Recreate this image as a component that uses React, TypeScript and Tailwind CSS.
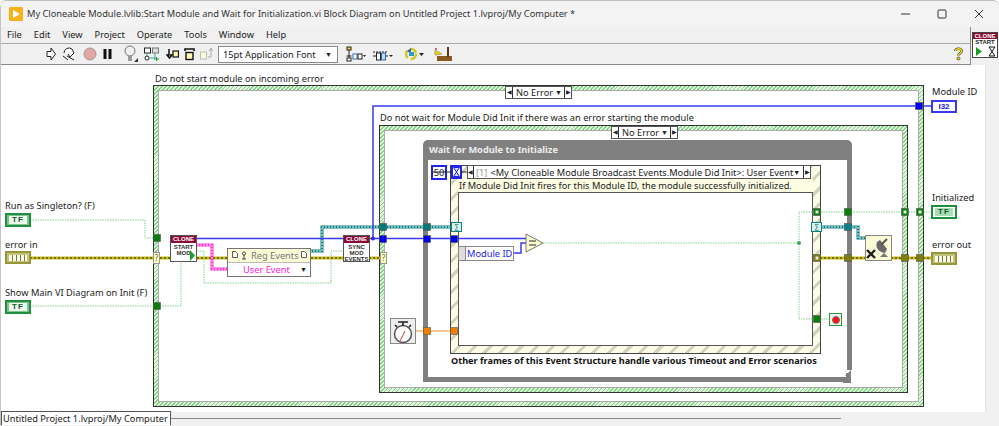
import React from "react";

const GH = "bg-[repeating-linear-gradient(135deg,#86d286_0px,#86d286_1.2px,#e2f5df_1.2px,#e2f5df_2.8px)]";
const EH = "bg-[repeating-linear-gradient(135deg,#d3d3bd_0px,#d3d3bd_3px,#fbfbe8_3px,#fbfbe8_11px)]";

const Wire = ({ d, k }: { d: string; k: "blue" | "err" | "teal" | "pink" | "green" | "orange" }) => {
  if (k === "blue") return <path d={d} fill="none" stroke="#3a3af2" strokeWidth="1.5" />;
  if (k === "orange") return <path d={d} fill="none" stroke="#f2902a" strokeWidth="1.2" />;
  if (k === "green") return <path d={d} fill="none" stroke="#86cf8c" strokeWidth="1" strokeDasharray="1.5 1" />;
  const c = { err: ["#c9bb10", "#222200", 3, "2 2"], teal: ["#0f8080", "#e8ffff", 3, "2 1"], pink: ["#ff30d8", "#ffe0fa", 3, "2 1"] }[k] as [string, string, number, string];
  return (
    <g fill="none">
      <path d={d} stroke={c[0]} strokeWidth={c[2]} />
      <path d={d} stroke={c[1]} strokeWidth="1" strokeDasharray={c[3]} />
    </g>
  );
};

const Tun = ({ x, y, c, dot }: { x: number; y: number; c: string; dot?: boolean }) => (
  <g>
    <rect x={x - 3.5} y={y - 3.5} width="7" height="7" fill={c} stroke="#555" strokeWidth="0.6" />
    {dot && <rect x={x - 1.5} y={y - 1.5} width="3" height="3" fill="#fff" opacity="0.85" />}
  </g>
);

const Diagram = () => (
  <svg className="absolute inset-0 w-full h-full" viewBox="0 0 999 347">
    <g transform="translate(0,-65)">
      <Wire k="green" d="M30 220H145V238H155" />
      <Wire k="green" d="M30 306H155M160 306H181V262" />
      <Wire k="green" d="M197 251H204V283H331V251H343" />
      <Wire k="err" d="M30 258H155M160 258H170M197 258H227M311 258H343M369 258H381" />
      <Wire k="pink" d="M197 245H212V269H228" />
      <Wire k="teal" d="M310 251H322V227H451" />
      <Wire k="blue" d="M197 238.5H526" />
      <Wire k="blue" d="M373 238.5V106H917M922 106H932" />
      <circle cx="373" cy="238.5" r="2" fill="#2828f0" />
      <Wire k="blue" d="M514 253H521V243H527" />
      <Wire k="green" d="M543 243H799M815 212H799V319H815M821 319H830M821 212H932" />
      <circle cx="799" cy="243" r="2" fill="#3aa85a" />
      <Wire k="teal" d="M822 227H858V238H866" />
      <Wire k="err" d="M820 258H866M891 258H932" />
      <Wire k="orange" d="M415 331H454" />
      <path d="M432 172H451M461 172H467" fill="none" stroke="#222" strokeWidth="1" />
      <Tun x={157} y={238} c="#0b7d0b" />
      <Tun x={157} y={306} c="#0b7d0b" />
      <Tun x={383} y={227} c="#0a7777" />
      <Tun x={427} y={227} c="#0a7777" />
      <Tun x={383} y={239} c="#0000ee" />
      <Tun x={427} y={239} c="#0000ee" />
      <Tun x={454} y={239} c="#0000ee" />
      <Tun x={919} y={106} c="#0000ee" />
      <Tun x={427} y={331} c="#f07f00" />
      <Tun x={454} y={331} c="#f07f00" />
      <Tun x={817} y={212} c="#0b7d0b" dot />
      <Tun x={848} y={212} c="#0b7d0b" />
      <Tun x={905} y={212} c="#0b7d0b" dot />
      <Tun x={920} y={212} c="#0b7d0b" dot />
      <Tun x={848} y={227} c="#0a7f90" />
      <Tun x={817} y={258} c="#7d7d10" dot />
      <Tun x={848} y={258} c="#7d7d10" />
      <Tun x={905} y={258} c="#7d7d10" />
      <Tun x={920} y={258} c="#7d7d10" />
      <Tun x={817} y={319} c="#0b7d0b" />
      <path d="M526 234L543 243L526 252Z" fill="#fbfbd2" stroke="#777" strokeWidth="1" />
      <path d="M529 241H536M529 245H536" stroke="#222" strokeWidth="1" />
      <path d="M846 370H856V384H846Z" fill="#fff" />
      <path d="M843 378H846V373H851V383H843Z" fill="#808080" />
      <path d="M845 376L851 370V376Z" fill="#808080" />
    </g>
  </svg>
);

const Clone = ({ lines, play, cls }: { lines: string[]; play?: boolean; cls: string }) => (
  <div className={`absolute w-[27px] h-[27px] bg-white border border-[#555] ${cls}`}>
    <div className="h-[7px] bg-[#8a0a33] text-white text-[6px] leading-[7px] font-bold text-center [font-family:'Liberation_Sans',sans-serif]">CLONE</div>
    <div className="text-[6px] leading-[6px] pt-[1px] font-bold text-center text-[#333] [font-family:'Liberation_Sans',sans-serif]">
      {lines.map((l) => (
        <div key={l}>{l}</div>
      ))}
    </div>
    {play && (
      <svg className="absolute right-0 bottom-0 w-[7px] h-[11px]" viewBox="0 0 7 11">
        <path d="M1 0L6 5.5L1 11Z" fill="#16a02a" />
      </svg>
    )}
  </div>
);

const TF = ({ cls, ind }: { cls: string; ind?: boolean }) => (
  <div className={`absolute w-[26px] h-[14px] border-2 border-[#1f8f3f] flex items-center justify-center ${ind ? "bg-white" : "bg-[#7cc48c]"} ${cls}`}>
    <div className={`w-[18px] h-[8px] text-[8px] leading-[8px] font-bold text-center tracking-[1px] [font-family:'Liberation_Sans',sans-serif] ${ind ? "bg-[#a8dcb4] text-[#0c5c22]" : "bg-[#ecf8ee] text-[#0c5c22]"}`}>TF</div>
  </div>
);

const Err = ({ cls }: { cls: string }) => (
  <div className={`absolute w-[26px] h-[13px] border-2 border-[#96963a] bg-[#c4c47c] flex items-center justify-center ${cls}`}>
    <div className="w-[18px] h-[6px] bg-[repeating-linear-gradient(90deg,#fbfbe8_0px,#fbfbe8_3px,#77773a_3px,#77773a_4px)]" />
  </div>
);

const Selector = ({ cls }: { cls: string }) => (
  <div className={`absolute w-[67px] h-[13px] bg-white border border-[#555] flex items-center text-[9.25px] leading-[13px] ${cls}`}>
    <span className="w-[7px] h-full border-r border-[#333] flex items-center justify-center text-[6px]">◀</span>
    <span className="flex-1 pl-[3px] whitespace-nowrap">No Error</span>
    <span className="text-[7px] pr-[2px]">▼</span>
    <span className="w-[7px] h-full border-l border-[#333] flex items-center justify-center text-[6px]">▶</span>
  </div>
);

const Lbl = ({ cls, children }: { cls: string; children: React.ReactNode }) => (
  <div className={`absolute whitespace-nowrap text-[9.25px] leading-[14px] text-[#222] ${cls}`}>{children}</div>
);

const Tool = ({ cls, w, children }: { cls: string; w: number; children: React.ReactNode }) => (
  <svg className={`shrink-0 ${cls}`} width={w} height="18" viewBox={`0 0 ${w} 18`}>
    {children}
  </svg>
);

const Doc = ({ cls }: { cls: string }) => (
  <svg className={`absolute ${cls}`} width="6" height="7" viewBox="0 0 6 7">
    <path d="M0.5 0.5H3.5L5.5 2.5V6.5H0.5Z" fill="#fff" stroke="#333" strokeWidth="0.8" />
  </svg>
);

export default function App() {
  return (
    <div className="relative w-[999px] h-[426px] overflow-hidden flex flex-col bg-white text-[#222] [font-family:'Noto_Sans',sans-serif]">
      {/* title bar */}
      <div className="h-[27px] shrink-0 bg-[#f3f3f3] border-t border-[#bdbdbd] flex items-center pl-[9px] rounded-t-[6px]">
        <svg width="14" height="14" viewBox="0 0 14 14">
          <rect width="14" height="14" rx="1.5" fill="#f5b21a" />
          <path d="M4 3L11 7L4 11Z" fill="#fff" />
        </svg>
        <span className="ml-[4px] text-[9.25px] whitespace-nowrap text-[#333]">My Cloneable Module.lvlib:Start Module and Wait for Initialization.vi Block Diagram on Untitled Project 1.lvproj/My Computer *</span>
        <div className="ml-auto flex items-center">
          <svg width="9" height="2" viewBox="0 0 9 2"><path d="M0 1H9" stroke="#333" strokeWidth="1" /></svg>
          <svg className="ml-[27px]" width="10" height="10" viewBox="0 0 10 10"><rect x="1" y="1" width="8" height="8" rx="1" fill="none" stroke="#333" /></svg>
          <svg className="ml-[27px] mr-[15px]" width="10" height="10" viewBox="0 0 10 10"><path d="M1 1L9 9M9 1L1 9" stroke="#333" /></svg>
        </div>
      </div>
      {/* menu */}
      <div className="h-[17px] shrink-0 bg-[#f0f0f0] border-b border-[#a9a9a9] flex items-center pl-[7px] gap-[12px] text-[9.25px] leading-[16px]">
        {["File", "Edit", "View", "Project", "Operate", "Tools", "Window", "Help"].map((m) => (
          <span key={m}>{m}</span>
        ))}
      </div>
      {/* toolbar */}
      <div className="h-[21px] shrink-0 bg-[#f0f0f0] border-b border-[#8a8a8a] flex items-center">
        <Tool cls="ml-[46px]" w={10}>
          <path d="M1 6.5H5V3L9.5 9L5 15V11.5H1Z" fill="#fff" stroke="#222" />
        </Tool>
        <Tool cls="ml-[6px]" w={14}>
          <path d="M2 8A5 5 0 0 1 10 4L12 8L8 12L6 9" fill="#fff" stroke="#222" />
          <path d="M1 11L6 15M5 11L12 15" stroke="#222" />
        </Tool>
        <Tool cls="ml-[7px]" w={14}>
          <circle cx="7" cy="9" r="6" fill="#e4a5a5" stroke="#999" />
        </Tool>
        <Tool cls="ml-[6px]" w={9}>
          <rect x="0.5" y="4" width="3" height="10" fill="#111" />
          <rect x="5.5" y="4" width="3" height="10" fill="#111" />
        </Tool>
        <Tool cls="ml-[12px]" w={14}>
          <circle cx="6" cy="6" r="5" fill="#eee" stroke="#777" />
          <rect x="4" y="11" width="4" height="5" fill="#999" />
          <path d="M14 13V17H10Z" fill="#333" />
        </Tool>
        <Tool cls="ml-[6px]" w={16}>
          <rect x="0.5" y="3" width="6" height="5" fill="#fff" stroke="#222" />
          <rect x="8.5" y="3" width="6" height="5" fill="#ddd" stroke="#777" />
          <circle cx="3" cy="13" r="2" fill="#fff" stroke="#222" />
          <path d="M3 8V11M11 8V13H5" stroke="#3a9" fill="none" />
          <path d="M10 14H15M12.5 12V16" stroke="#1a9a3a" />
        </Tool>
        <Tool cls="ml-[6px]" w={13}>
          <path d="M3 4V10H1L3.5 13L6 10H4" fill="none" stroke="#111" strokeWidth="1.5" />
          <rect x="7" y="6" width="5.5" height="6" fill="#fff8b0" stroke="#111" strokeWidth="1.2" />
        </Tool>
        <Tool cls="ml-[5px]" w={13}>
          <path d="M1 6V4H10V6" fill="none" stroke="#111" strokeWidth="1.6" />
          <rect x="2" y="7.5" width="7" height="7" fill="#fff8b0" stroke="#111" strokeWidth="1.4" />
        </Tool>
        <Tool cls="ml-[3px]" w={14}>
          <rect x="0.5" y="7" width="6" height="7" fill="#fffbd8" stroke="#bbb" />
          <path d="M8 12H11V4M9 6L11 3L13 6" fill="none" stroke="#aaa" />
        </Tool>
        <div className="shrink-0 ml-[4px] w-[120px] h-[17px] bg-white border border-[#8a8a8a] flex items-center pl-[4px] pr-[5px] text-[9.25px] leading-[15px]">
          <span className="whitespace-nowrap">15pt Application Font</span>
          <span className="ml-auto text-[7px]">▼</span>
        </div>
        <Tool cls="ml-[8px]" w={20}>
          <rect x="1" y="2" width="4" height="3" fill="#f4d04a" stroke="#222" />
          <path d="M3 5V14M0.5 11H5.5" stroke="#222" />
          <rect x="1" y="13" width="4" height="3" fill="#fff" stroke="#222" />
          <rect x="7" y="9" width="4" height="5" fill="#fff" stroke="#2a6ab0" />
          <rect x="12" y="9" width="4" height="5" fill="#fff" stroke="#222" />
          <path d="M17 10H20L18.5 12Z" fill="#222" />
        </Tool>
        <Tool cls="ml-[7px]" w={20}>
          <path d="M0 7H14" stroke="#222" strokeDasharray="2 1" />
          <path d="M0 11H3M12 11H15" stroke="#222" />
          <rect x="3.5" y="8" width="4" height="7" fill="#fff" stroke="#222" />
          <rect x="8.5" y="8" width="4" height="7" fill="#bde" stroke="#2a6ab0" />
          <path d="M16 10H20L18 12Z" fill="#222" />
        </Tool>
        <Tool cls="ml-[11px]" w={20}>
          <circle cx="7" cy="9" r="5" fill="none" stroke="#d9c41a" strokeWidth="2.5" strokeDasharray="8 3" />
          <path d="M3 6L7 3V9Z" fill="#2a6ab0" />
          <rect x="5" y="7" width="5" height="4" fill="#2a9ad0" />
          <path d="M15 8H20L17.5 11Z" fill="#222" />
        </Tool>
        <Tool cls="ml-[10px]" w={18}>
          <path d="M1 5L8 9L1 10Z" fill="#f0d01a" stroke="#883" strokeWidth="0.6" />
          <rect x="3" y="11" width="15" height="5" fill="#8a5a20" />
          <path d="M14 2V12" stroke="#5a3a10" strokeWidth="2" />
          <circle cx="2" cy="4" r="1" fill="#d33" />
        </Tool>
        <svg className="ml-auto mr-[36px] shrink-0" width="9" height="16" viewBox="0 0 12 18">
          <path d="M2 5C2 1 10 1 10 5C10 8 6 8 6 11" fill="none" stroke="#333" strokeWidth="3.4" />
          <path d="M2 5C2 1 10 1 10 5C10 8 6 8 6 11" fill="none" stroke="#f2e21a" strokeWidth="1.8" />
          <circle cx="6" cy="15" r="2" fill="#f2e21a" stroke="#333" />
        </svg>
      </div>
      {/* VI icon */}
      <div className="absolute left-[970px] top-[27px] w-[29px] h-[38px] bg-[#f0f0f0] border-l border-[#8a8a8a] pl-[1px] pt-[5px]">
        <div className="w-[26px] h-[26px] bg-white border border-[#444] relative">
          <div className="h-[6px] bg-[#8a0a33] text-white text-[6px] leading-[6px] font-bold text-center [font-family:'Liberation_Sans',sans-serif]">CLONE</div>
          <div className="text-[6px] leading-[7px] font-bold text-center text-[#222] [font-family:'Liberation_Sans',sans-serif]">START</div>
          <svg className="absolute left-[2px] top-[13px]" width="22" height="11" viewBox="0 0 22 11">
            <path d="M1 1L7 5.5L1 10Z" fill="#16a02a" />
            <path d="M14 1H20L14 10H20Z" fill="#fff" stroke="#111" />
          </svg>
        </div>
      </div>
      {/* canvas */}
      <div className="relative flex-1 min-h-0 bg-white text-[9.25px]">
        <div className={`absolute left-[153px] top-[20px] w-[771px] h-[322px] border border-[#333] p-[4px] ${GH}`}>
          <div className="w-full h-full bg-white border border-[#aaa]" />
        </div>
        <div className={`absolute left-[379px] top-[60px] w-[529px] h-[268px] border border-[#333] p-[4px] ${GH}`}>
          <div className="w-full h-full bg-white border border-[#aaa]" />
        </div>
        <div className="absolute left-[423px] top-[75px] w-[429px] h-[242px] rounded-t-[5px] border-x-[5px] border-b-[5px] border-[#808080] bg-white">
          <div className="h-[20px] bg-[#808080] -mx-[1px] text-[#eeeeee] font-bold text-[9.25px] leading-[19px] pl-[2px] whitespace-nowrap">Wait for Module to Initialize</div>
        </div>
        <div className={`absolute left-[450px] top-[100px] w-[371px] h-[189px] border border-[#444] p-[7px] pt-[13px] ${EH}`}>
          <div className="w-full h-full bg-white border border-[#555]" />
        </div>
        <div className="absolute left-[458px] top-[114px] w-[355px] h-[14px] bg-[#fdfde4] border-b border-[#555] text-[9.25px] leading-[13px] pl-[1px] whitespace-nowrap">If Module Did Init fires for this Module ID, the module successfully initialized.</div>
        <div className="absolute left-[467px] top-[100px] w-[344px] h-[14px] bg-white border border-[#555] flex items-center text-[9.25px] leading-[13px]">
          <span className="w-[6px] h-full border-r border-[#333] flex items-center justify-center text-[6px]">◀</span>
          <span className="pl-[2px] text-[#999] whitespace-nowrap">[1]</span>
          <span className="pl-[3px] whitespace-nowrap">&lt;My Cloneable Module Broadcast Events.Module Did Init&gt;: User Event</span>
          <span className="ml-auto pr-[3px] text-[7px]">▼</span>
          <span className="w-[7px] h-full border-l border-[#333] flex items-center justify-center text-[6px]">▶</span>
        </div>
        <Selector cls="left-[505px] top-[21px]" />
        <Selector cls="left-[611px] top-[61px]" />
        <div className="absolute left-[431px] top-[100px] w-[16px] h-[15px] border-2 border-[#2323e8] bg-white text-[9.25px] leading-[11px] text-center">50</div>
        <div className="absolute left-[451px] top-[100px] w-[11px] h-[14px] border-2 border-[#2323e8] bg-white">
          <svg width="7" height="10" viewBox="0 0 7 10"><path d="M0.5 0.5H6.5L0.5 9.5H6.5Z" fill="#cdd9ff" stroke="#2323e8" /></svg>
        </div>
        <Diagram />
        <TF cls="left-[5px] top-[148px]" />
        <TF cls="left-[5px] top-[235px]" />
        <Err cls="left-[5px] top-[186px]" />
        <TF ind cls="left-[931px] top-[140px]" />
        <Err cls="left-[931px] top-[187px]" />
        <div className="absolute left-[931px] top-[35px] w-[26px] h-[13px] border-2 border-[#3a3af0] bg-white text-[#2323d8] text-[8px] leading-[9px] font-bold text-center [font-family:'Liberation_Sans',sans-serif]">I32</div>
        <div className="absolute left-[153px] top-[187px] w-[7px] h-[12px] bg-[#fdfdc0] border border-[#999] text-[8px] leading-[10px] text-center text-[#663]">?</div>
        <div className="absolute left-[380px] top-[187px] w-[7px] h-[12px] bg-[#fdfdc0] border border-[#999] text-[8px] leading-[10px] text-center text-[#663]">?</div>
        <Clone play lines={["START", "MOD"]} cls="left-[170px] top-[170px]" />
        <Clone lines={["SYNC", "MOD", "EVENTS"]} cls="left-[343px] top-[170px]" />
        <div className="absolute left-[227px] top-[183px] w-[84px] h-[29px] border border-[#777] bg-white">
          <div className="h-[14px] bg-[#fbfbd8] border-b border-[#bbb] text-[9.25px] leading-[13px] text-[#777] pl-[23px] whitespace-nowrap">Reg Events</div>
          <Doc cls="left-[4px] top-[2px]" />
          <Doc cls="right-[3px] top-[2px]" />
          <svg className="absolute left-[13px] top-[2px]" width="6" height="9" viewBox="0 0 6 9">
            <circle cx="3" cy="2.5" r="1.6" fill="none" stroke="#444" />
            <path d="M3 4V8M1 8H5" stroke="#444" />
          </svg>
          <div className="flex items-center text-[9.25px] leading-[13px] text-[#ff22dd] pl-[15px] pr-[3px]">
            <span className="whitespace-nowrap">User Event</span>
            <span className="ml-auto text-[7px] text-[#222]">▼</span>
          </div>
        </div>
        <div className="absolute left-[458px] top-[181px] w-[56px] h-[15px] border border-[#888] bg-white flex items-center">
          <span className="w-[7px] h-full bg-[#ddd] border-r border-[#888]" />
          <span className="pl-[1px] text-[9.25px] text-[#2323e8] whitespace-nowrap">Module ID</span>
        </div>
        <div className="absolute left-[451px] top-[157px] w-[11px] h-[10px] bg-[#d8f2ee] border border-[#0f8080] text-[7px] leading-[8px] text-center text-[#055]">∑</div>
        <div className="absolute left-[811px] top-[157px] w-[11px] h-[10px] bg-[#d8f2ee] border border-[#0f8080] text-[7px] leading-[8px] text-center text-[#055]">∑</div>
        {/* unregister */}
        <div className="absolute left-[865px] top-[170px] w-[27px] h-[26px] bg-[#fbfbd8] border border-[#888]">
          <svg width="25" height="24" viewBox="0 0 25 24">
            <path d="M11 6C9 11 12 16 19 17L21 13L14 4Z" fill="#6a6a6a" />
            <path d="M15 9L21 3" stroke="#555" strokeWidth="2" />
            <path d="M18 17L22 21H14Z" fill="#777" />
            <path d="M1 14L9 22M9 14L1 22" stroke="#222" strokeWidth="2.4" />
          </svg>
        </div>
        {/* timer */}
        <div className="absolute left-[390px] top-[253px] w-[26px] h-[26px] bg-[#eee] border border-[#888]">
          <svg width="24" height="24" viewBox="0 0 24 24">
            <circle cx="12" cy="15" r="8.5" fill="#fff" stroke="#555" strokeWidth="1.5" />
            <path d="M12 3V7M7 3L17 3M4 6L6 8M20 6L18 8" stroke="#222" strokeWidth="1.6" />
            <path d="M9 22L14 12" stroke="#d33" />
          </svg>
        </div>
        {/* stop */}
        <div className="absolute left-[829px] top-[248px] w-[13px] h-[13px] border border-[#2a9a3a] bg-[#f3f3f3] flex items-center justify-center">
          <div className="w-[8px] h-[8px] rounded-full bg-[#ff1010] border border-[#777]" />
        </div>
        <Lbl cls="left-[155px] top-[7px]">Do not start module on incoming error</Lbl>
        <Lbl cls="left-[380px] top-[46px]">Do not wait for Module Did Init if there was an error starting the module</Lbl>
        <Lbl cls="left-[932px] top-[20px]">Module ID</Lbl>
        <Lbl cls="left-[932px] top-[126px]">Initialized</Lbl>
        <Lbl cls="left-[932px] top-[173px]">error out</Lbl>
        <Lbl cls="left-[5px] top-[134px]">Run as Singleton? (F)</Lbl>
        <Lbl cls="left-[5px] top-[173px]">error in</Lbl>
        <Lbl cls="left-[5px] top-[221px]">Show Main VI Diagram on Init (F)</Lbl>
        <div className="absolute left-[451px] top-[289px] whitespace-nowrap text-[9.15px] leading-[14px] font-bold text-[#111]">Other frames of this Event Structure handle various Timeout and Error scenarios</div>
        <div className="absolute right-0 top-0 bottom-0 w-[14px] bg-[#f0f0f0] border-l border-[#e3e3e3]" />
      </div>
      {/* bottom */}
      <div className="h-[14px] shrink-0 bg-[#f0f0f0] flex items-start relative">
        <div className="h-[14px] w-[170px] border-t border-x border-[#555] bg-white ml-[1px] -mt-[1px] text-[9.25px] leading-[13px] pl-[1px] whitespace-nowrap">Untitled Project 1.lvproj/My Computer</div>
        <div className="ml-0 mt-[6px] w-[670px] h-[1px] bg-[#888]" />
      </div>
      <div className="absolute left-0 top-[6px] bottom-0 w-[1px] bg-[#c4c4c4]" />
    </div>
  );
}
